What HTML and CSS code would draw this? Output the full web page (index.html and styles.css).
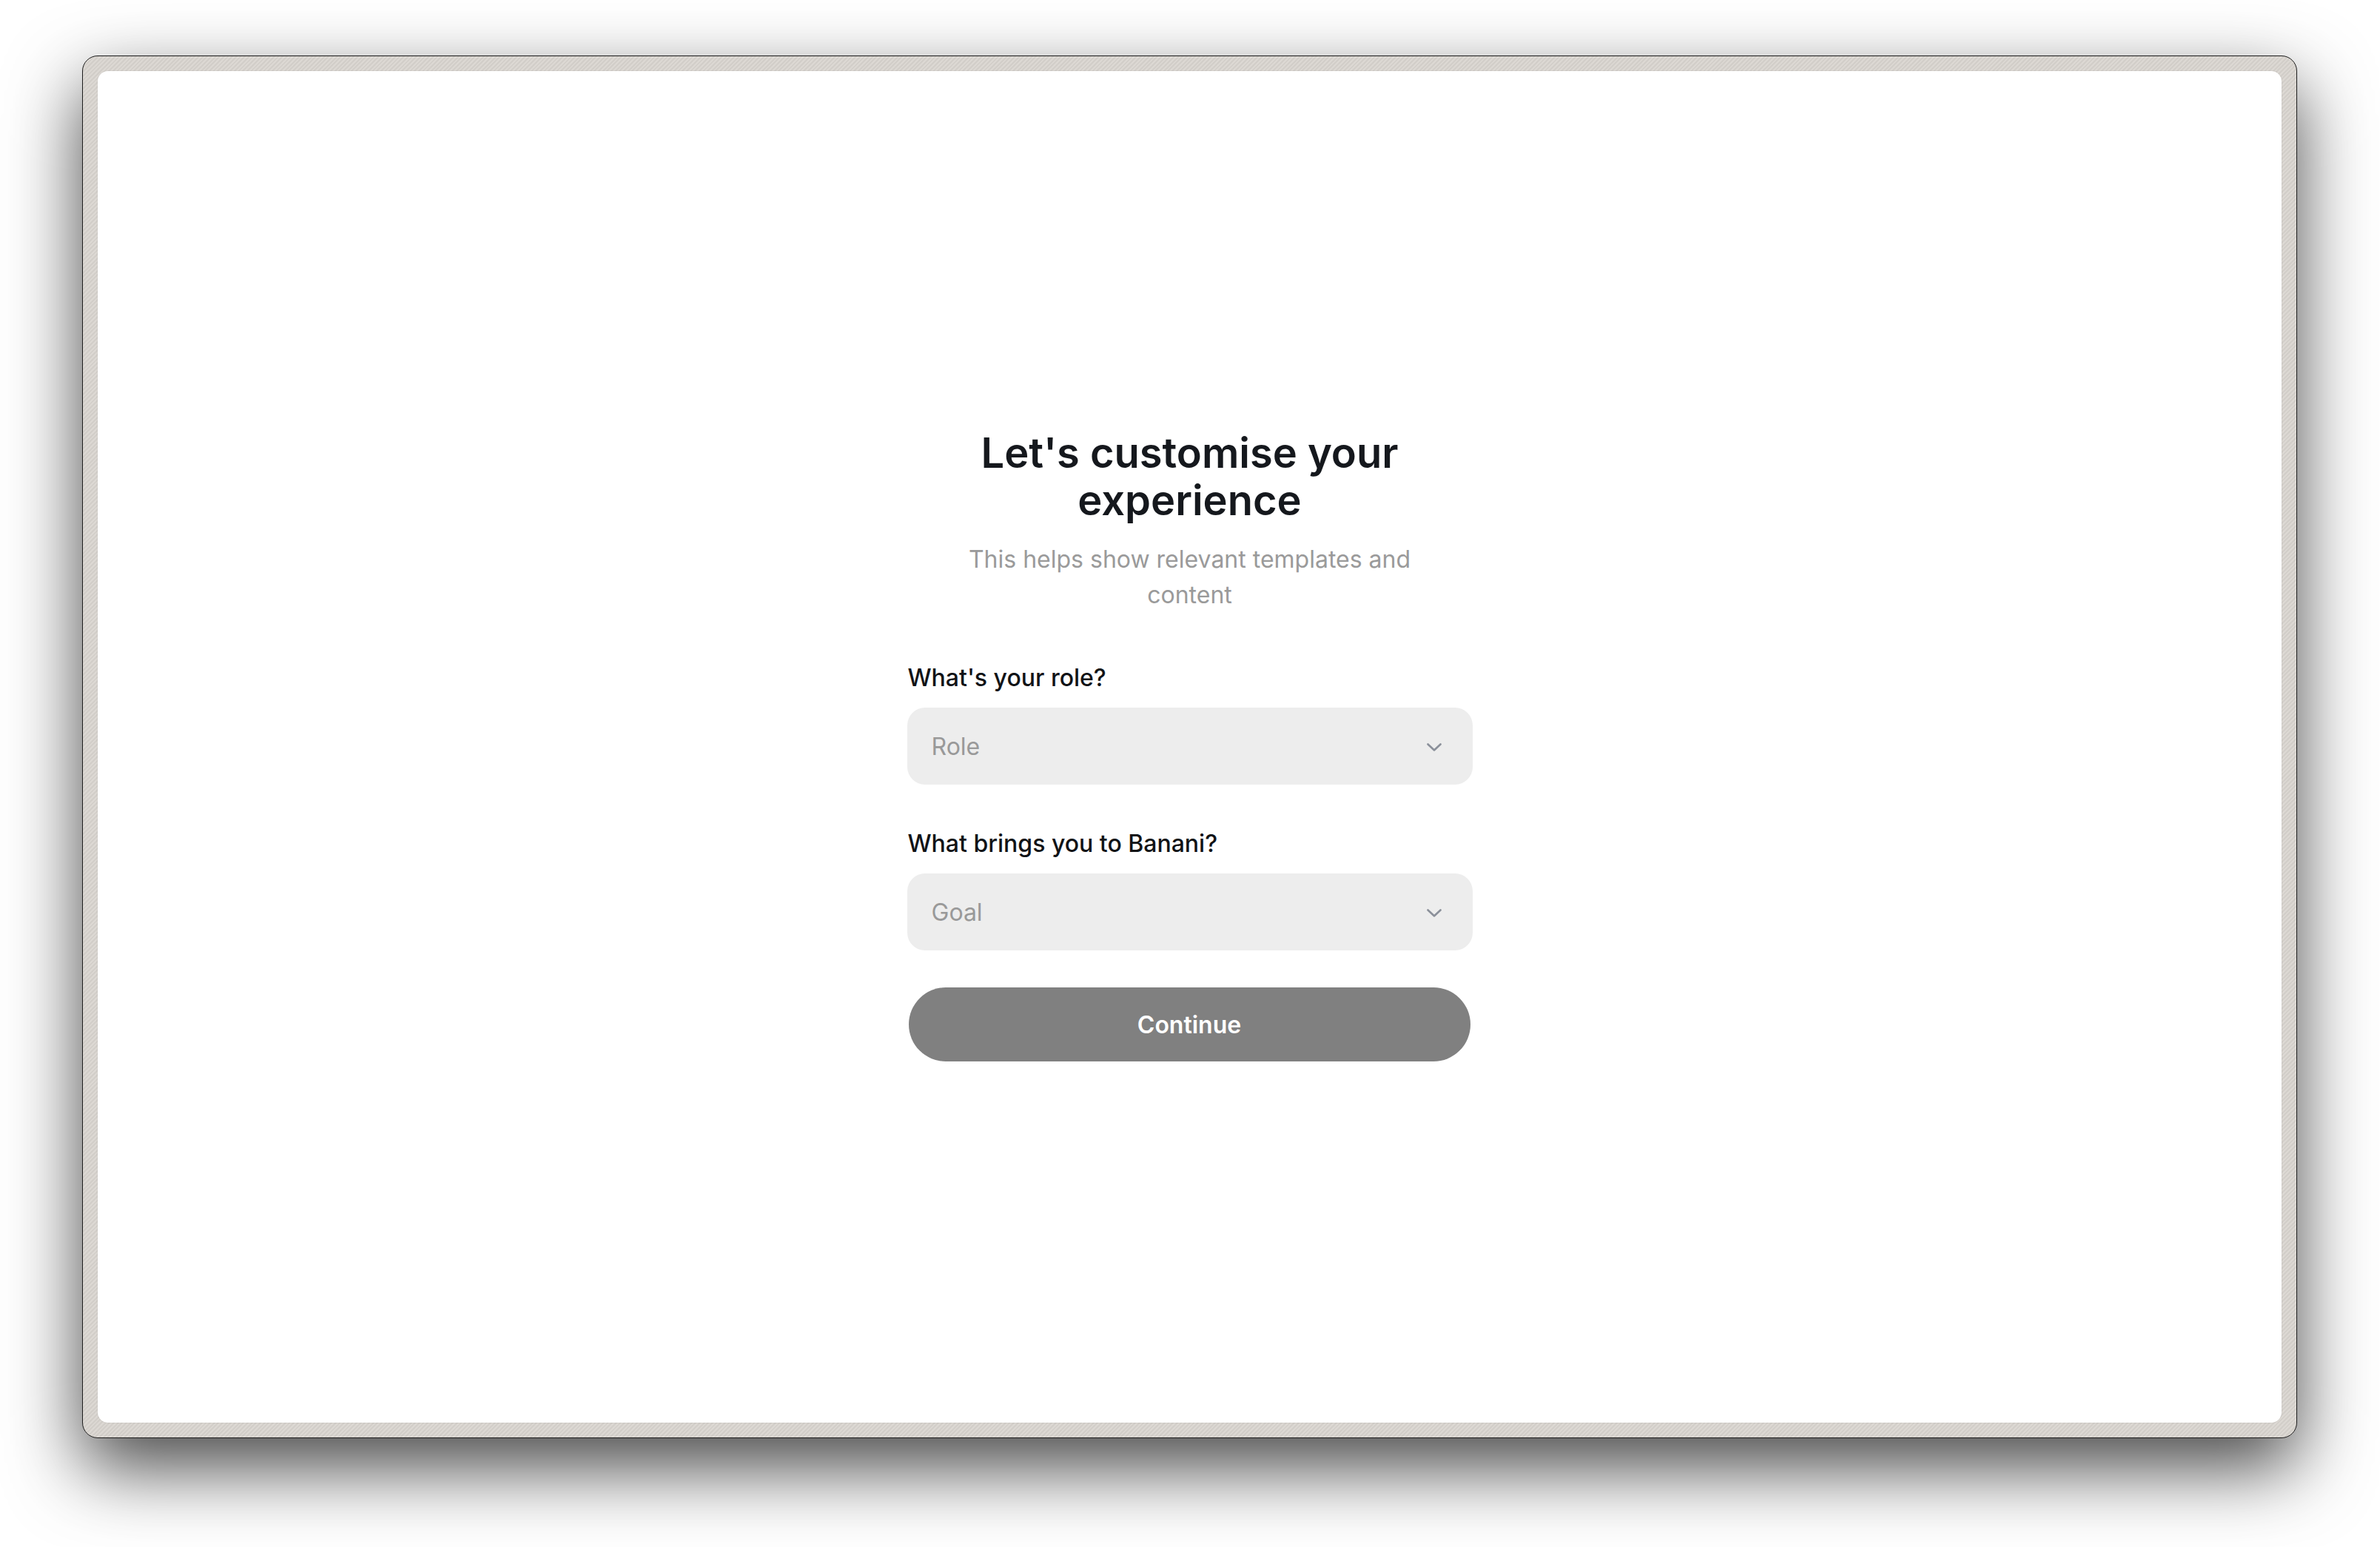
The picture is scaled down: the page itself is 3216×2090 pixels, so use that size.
FILE: index.html
```html
<!DOCTYPE html>
<html lang="en">
<head>
<meta charset="utf-8">
<title>Let's customise your experience</title>
<link rel="stylesheet" href="styles.css">
</head>
<body>
<div class="stage">
  <div class="frame">
    <main class="screen">
      <form class="onboard">
        <header class="intro">
          <h1 class="title">Let's customise your experience</h1>
          <p class="subtitle">This helps show relevant templates and content</p>
        </header>
        <div class="group">
          <label class="label">What's your role?</label>
          <div class="select">
            <span class="placeholder">Role</span>
            <svg class="chevron" width="20" height="11" viewBox="0 0 20 11"><path d="M1.5 1.5 L10 9.5 L18.5 1.5" fill="none" stroke="#8b909a" stroke-width="2.6" stroke-linecap="round" stroke-linejoin="round"/></svg>
          </div>
        </div>
        <div class="group">
          <label class="label">What brings you to Banani?</label>
          <div class="select">
            <span class="placeholder">Goal</span>
            <svg class="chevron" width="20" height="11" viewBox="0 0 20 11"><path d="M1.5 1.5 L10 9.5 L18.5 1.5" fill="none" stroke="#8b909a" stroke-width="2.6" stroke-linecap="round" stroke-linejoin="round"/></svg>
          </div>
        </div>
        <button class="continue" type="button">Continue</button>
      </form>
    </main>
  </div>
</div>
</body>
</html>
```
FILE: styles.css
```css
* { box-sizing: border-box; }
html, body { margin: 0; padding: 0; }
body {
  background: #ffffff;
  font-family: Inter, "Noto Sans", "Liberation Sans", sans-serif;
  width: 3216px;
  height: 2090px;
  overflow: hidden;
}
.stage {
  height: 100%;
  display: flex;
  padding: 75px 112px 147px 111px;
}
.frame {
  flex: 1;
  display: flex;
  padding: 20px;
  border: 1px solid #1c1c1c;
  border-radius: 21px;
  background-color: #d8d4cf;
  background-image: repeating-linear-gradient(135deg, #dcd8d3 0 2px, #d2cec9 2px 4px);
  box-shadow: 0 40px 100px rgba(0, 0, 0, 0.72);
}
.screen {
  flex: 1;
  background: #ffffff;
  border-radius: 14px;
  display: flex;
  align-items: center;
  justify-content: center;
  box-shadow: 0 0 0 1px rgba(0, 0, 0, 0.04);
  padding-bottom: 4px;
}
.onboard {
  width: 764px;
  display: flex;
  flex-direction: column;
}
.intro {
  text-align: center;
  padding: 0 40px;
  margin-bottom: 64px;
}
.title {
  margin: 0;
  font-size: 56px;
  line-height: 64px;
  font-weight: 600;
  color: #15181d;
}
.subtitle {
  margin: 24px 0 0;
  font-size: 32px;
  line-height: 48px;
  font-weight: 400;
  color: #9a9a9a;
}
.group {
  display: flex;
  flex-direction: column;
  gap: 16px;
}
.group + .group { margin-top: 56px; }
.label {
  font-size: 32px;
  line-height: 48px;
  font-weight: 500;
  color: #111316;
  padding-left: 1px;
}
.select {
  height: 104px;
  border-radius: 24px;
  background: #ededed;
  display: flex;
  align-items: center;
  justify-content: space-between;
  padding: 0 42px 0 33px;
}
.placeholder {
  font-size: 32px;
  color: #999999;
}
.chevron { display: block; margin-top: 2px; }
.continue {
  margin: 50px 3px 0 2px;
  height: 100px;
  border: none;
  border-radius: 50px;
  background: #808080;
  color: #ffffff;
  font-family: inherit;
  font-size: 32px;
  font-weight: 600;
}
```
